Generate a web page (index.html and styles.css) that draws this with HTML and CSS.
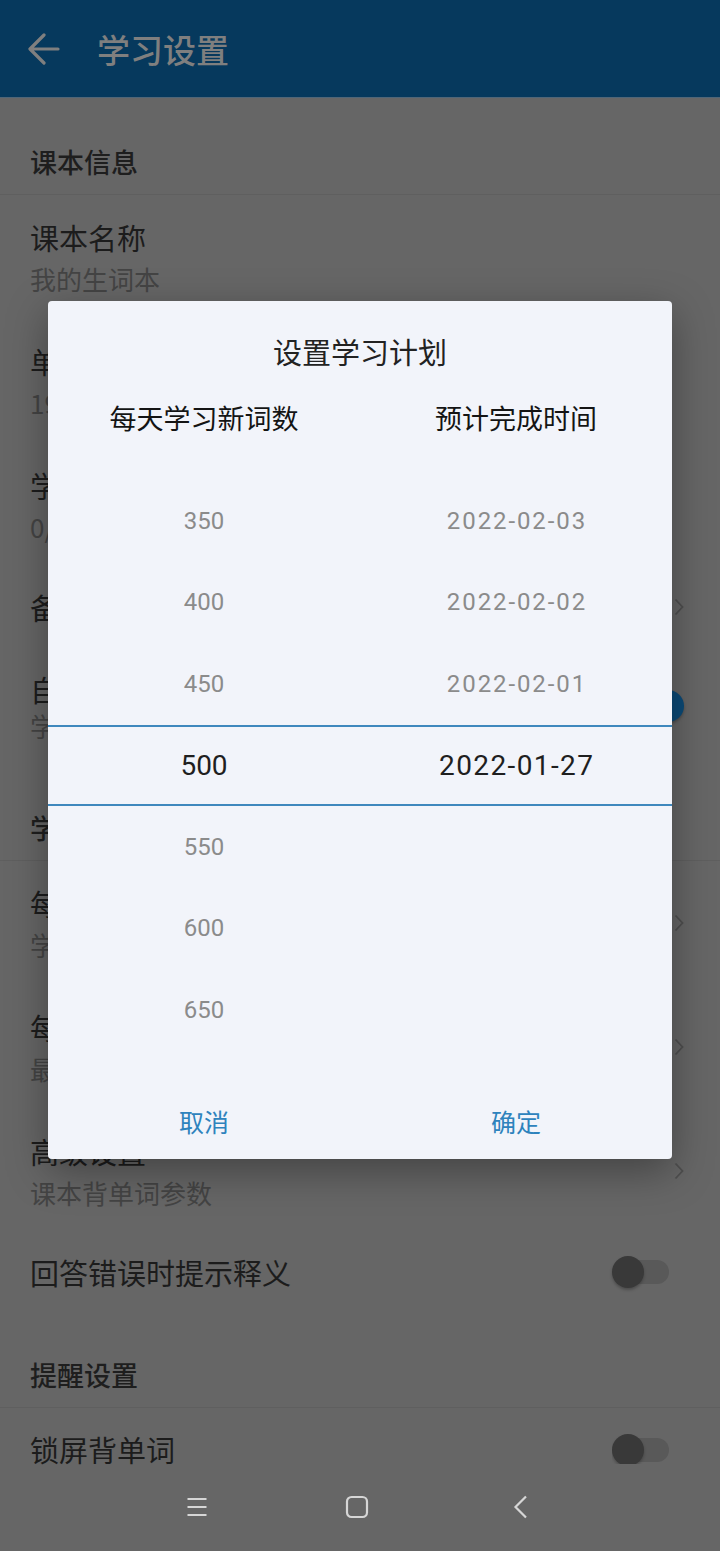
FILE: index.html
```html
<!DOCTYPE html>
<html lang="zh-CN">
<head>
<meta charset="utf-8">
<title>学习设置</title>
<link rel="stylesheet" href="styles.css">
</head>
<body>
<div class="screen">
  <header class="appbar">
    <svg class="back" width="32" height="32" viewBox="0 0 32 32"><path d="M30 16H3M16 2L2 16l14 14" fill="none" stroke="#7f7f7f" stroke-width="3.2" stroke-linecap="round" stroke-linejoin="round"/></svg>
    <h1 class="appbar-title">学习设置</h1>
  </header>
  <main class="content">
    <div class="section">课本信息</div>
    <div class="item two">
      <div class="texts"><div class="title">课本名称</div><div class="sub">我的生词本</div></div>
    </div>
    <div class="item two">
      <div class="texts"><div class="title">单词总数</div><div class="sub">1956</div></div>
    </div>
    <div class="item two">
      <div class="texts"><div class="title">学习进度</div><div class="sub">0/1956</div></div>
    </div>
    <div class="item one h80">
      <div class="title">备份与同步</div>
      <svg class="chev" width="10" height="18" viewBox="0 0 10 18"><path d="M1.5 1.5L8.5 9l-7 7.5" fill="none" stroke="#4f4f4f" stroke-width="1.8"/></svg>
    </div>
    <div class="item two toggle-item">
      <div class="texts"><div class="title">自动发音</div><div class="sub short">学习时自动发音</div></div>
      <div class="toggle on"><span class="track"></span><span class="thumb"></span></div>
    </div>
    <div class="section">学习计划</div>
    <div class="item two">
      <div class="texts"><div class="title">每日新词</div><div class="sub">学习新词</div></div>
      <svg class="chev" width="10" height="18" viewBox="0 0 10 18"><path d="M1.5 1.5L8.5 9l-7 7.5" fill="none" stroke="#4f4f4f" stroke-width="1.8"/></svg>
    </div>
    <div class="item two">
      <div class="texts"><div class="title">每日复习</div><div class="sub">最多复习</div></div>
      <svg class="chev" width="10" height="18" viewBox="0 0 10 18"><path d="M1.5 1.5L8.5 9l-7 7.5" fill="none" stroke="#4f4f4f" stroke-width="1.8"/></svg>
    </div>
    <div class="item two">
      <div class="texts"><div class="title">高级设置</div><div class="sub">课本背单词参数</div></div>
      <svg class="chev" width="10" height="18" viewBox="0 0 10 18"><path d="M1.5 1.5L8.5 9l-7 7.5" fill="none" stroke="#4f4f4f" stroke-width="1.8"/></svg>
    </div>
    <div class="item one h78">
      <div class="title">回答错误时提示释义</div>
      <div class="toggle"><span class="track"></span><span class="thumb"></span></div>
    </div>
    <div class="section">提醒设置</div>
    <div class="item one h82">
      <div class="title tight">锁屏背单词</div>
      <div class="toggle"><span class="track"></span><span class="thumb"></span></div>
    </div>
  </main>
  <nav class="navbar">
    <svg width="24" height="24" viewBox="0 0 24 24"><path d="M2.5 4h19M2.5 12h19M2.5 20h19" stroke="#d6d6d6" stroke-width="2.2"/></svg>
    <svg width="24" height="24" viewBox="0 0 24 24"><rect x="2" y="2" width="20" height="20" rx="4.5" fill="none" stroke="#d6d6d6" stroke-width="2.2"/></svg>
    <svg class="nav-back" width="24" height="24" viewBox="0 0 24 24"><path d="M17 1.5L6.5 12 17 22.5" fill="none" stroke="#d6d6d6" stroke-width="2.2"/></svg>
  </nav>

  <div class="dialog">
    <div class="dialog-title">设置学习计划</div>
    <div class="cols">
      <div class="col-head">每天学习新词数</div>
      <div class="col-head">预计完成时间</div>
    </div>
    <div class="picker">
      <div class="prow"><span>350</span><span class="date">2022-02-03</span></div>
      <div class="prow"><span>400</span><span class="date">2022-02-02</span></div>
      <div class="prow"><span>450</span><span class="date">2022-02-01</span></div>
      <div class="prow sel"><span>500</span><span class="date">2022-01-27</span></div>
      <div class="prow"><span>550</span><span></span></div>
      <div class="prow"><span>600</span><span></span></div>
      <div class="prow"><span>650</span><span></span></div>
    </div>
    <div class="actions">
      <span class="btn">取消</span>
      <span class="btn">确定</span>
    </div>
  </div>
</div>
</body>
</html>
```

FILE: styles.css
```css
* { box-sizing: border-box; margin: 0; padding: 0; }
html, body { background: #666666; }
body {
  font-family: Roboto, "Noto Sans CJK SC", sans-serif;
  color: #1d1d1d;
}
.screen {
  position: relative;
  width: 720px;
  height: 1551px;
  overflow: hidden;
  background: #666666;
}
.appbar {
  height: 98px;
  background: #06395d;
  border-bottom: 1px solid #4f6678;
  display: flex;
  align-items: center;
  padding-left: 28px;
}
.back { display: block; margin-right: 37px; }
.appbar-title {
  font-family: "Noto Sans CJK SC", sans-serif;
  font-size: 33px;
  font-weight: 500;
  color: #7f7f7f;
  line-height: 40px;
}
.content {
  height: 1365px;
}
.section {
  height: 97px;
  padding: 48px 30px 0;
  font-family: "Noto Sans CJK SC", sans-serif;
  font-size: 27px;
  font-weight: 500;
  line-height: 32px;
  color: #1e1e1e;
  border-bottom: 1px solid #5f5f5f;
}
.item {
  display: flex;
  align-items: center;
  justify-content: space-between;
  padding: 0 36px 0 30px;
  font-family: "Noto Sans CJK SC", sans-serif;
}
.item.two { height: 124px; }
.item.two .texts { align-self: flex-start; padding-top: 24px; }
.item.toggle-item { height: 117px; }
.item.h80 { height: 80px; }
.item.h78 { height: 78px; }
.item.h82 { height: 82px; flex-shrink: 0; }
.title {
  font-size: 29px;
  line-height: 36px;
  color: #1c1c1c;
}
.title.tight { line-height: 28px; }
.sub {
  font-size: 26px;
  line-height: 48px;
  color: #444444;
}
.sub.short { line-height: 38px; }
.chev { display: block; }
.toggle {
  position: relative;
  width: 57px;
  height: 32px;
  margin-right: 15px;
}
.h82 .toggle { height: 30px; overflow: hidden; }
.toggle .track {
  position: absolute;
  left: 10px;
  right: 0;
  top: 4px;
  height: 24px;
  border-radius: 12px;
  background: #595959;
}
.toggle .thumb {
  position: absolute;
  left: 0;
  top: 0;
  width: 32px;
  height: 32px;
  border-radius: 50%;
  background: #393939;
  box-shadow: 0 2px 3px rgba(0,0,0,0.25);
}
.toggle.on .track { background: #2b4a61; }
.toggle.on .thumb { left: 40px; background: #0b4a77; }
.navbar {
  height: 88px;
  display: flex;
  align-items: center;
  gap: 136px;
  padding-left: 185px;
}
.navbar svg { display: block; }
.navbar .nav-back { margin-left: 4px; }

.dialog {
  position: absolute;
  left: 48px;
  top: 301px;
  width: 624px;
  background: #f2f4fa;
  border-radius: 4px;
  padding-top: 30px;
  box-shadow: 0 12px 40px rgba(0,0,0,0.35);
  font-family: Roboto, "Noto Sans CJK SC", sans-serif;
}
.dialog-title {
  text-align: center;
  font-family: "Noto Sans CJK SC", sans-serif;
  font-size: 29px;
  line-height: 40px;
  color: #222222;
}
.cols {
  margin-top: 29px;
  display: grid;
  grid-template-columns: 1fr 1fr;
}
.col-head {
  text-align: center;
  font-family: "Noto Sans CJK SC", sans-serif;
  font-size: 27px;
  line-height: 36px;
  color: #141414;
}
.picker { margin-top: 44px; }
.prow {
  height: 81.5px;
  display: grid;
  grid-template-columns: 1fr 1fr;
  align-items: center;
  text-align: center;
  font-size: 24px;
  color: #8b8b8b;
}
.prow .date { letter-spacing: 1.9px; padding-left: 1.9px; }
.prow.sel {
  border-top: 2px solid #3f88bd;
  border-bottom: 2px solid #3f88bd;
  font-size: 28px;
  color: #1f1f1f;
}
.prow.sel .date { letter-spacing: 1.4px; padding-left: 1.4px; }
.actions {
  margin-top: 32.5px;
  height: 76px;
  display: grid;
  grid-template-columns: 1fr 1fr;
  align-items: center;
  text-align: center;
}
.btn {
  font-family: "Noto Sans CJK SC", sans-serif;
  font-size: 25px;
  color: #2e83bd;
}
```
